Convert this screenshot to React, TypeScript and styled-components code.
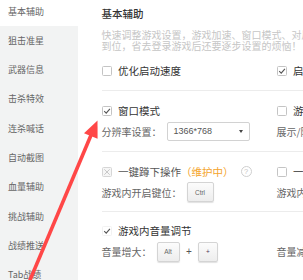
import React from 'react';
import styled, { createGlobalStyle } from 'styled-components';

const GlobalStyle = createGlobalStyle`
  html, body { margin: 0; padding: 0; background: #fff; }
  body { font-family: "Noto Sans CJK SC", "Noto Sans", sans-serif; }
`;

const Frame = styled.div`
  position: relative;
  display: flex;
  width: 303px;
  height: 280px;
  overflow: hidden;
  background: #fff;
`;

const Sidebar = styled.nav`
  flex: 0 0 78px;
  background: #f2f3f3;
  overflow: hidden;
`;

const NavList = styled.ul`
  list-style: none;
  margin: -3.67px 0 0;
  padding: 0;
`;

const NavItem = styled.li<{ $active?: boolean }>`
  height: 29.33px;
  display: flex;
  align-items: center;
  padding-left: 8px;
  font-size: 9px;
  color: #666;
  background: ${(p) => (p.$active ? '#fff' : 'transparent')};
  white-space: nowrap;
`;

const Main = styled.main`
  flex: 1;
  min-width: 0;
  padding-left: 23.5px;
  overflow: hidden;
`;

const Heading = styled.h2`
  margin: 8px 0 0;
  font-size: 10.5px;
  line-height: 12px;
  font-weight: 500;
  color: #333;
  white-space: nowrap;
`;

const Desc = styled.p`
  margin: 8.5px 0 0;
  font-size: 10px;
  line-height: 11.5px;
  color: #c6c6c6;
  white-space: nowrap;
`;

const Section = styled.section<{ $top: number; $bottom: number }>`
  padding: ${(p) => p.$top}px 0 ${(p) => p.$bottom}px;
  border-bottom: 1px solid ${(p) => (p.$bottom ? '#ececec' : 'transparent')};
`;

const Grid = styled.div`
  display: grid;
  grid-template-columns: 175px 175px;
  row-gap: 4px;
  align-items: center;
`;

const Cell = styled.div<{ $h: number }>`
  display: flex;
  align-items: center;
  height: ${(p) => p.$h}px;
  white-space: nowrap;
`;

type BoxState = 'off' | 'on' | 'tick' | 'disabled';

const Box = styled.span<{ $state: BoxState }>`
  flex: 0 0 auto;
  box-sizing: border-box;
  width: 10px;
  height: 10px;
  margin-right: 6.5px;
  border: 1px solid
    ${(p) => (p.$state === 'tick' ? '#f2f2f2' : p.$state === 'disabled' ? '#d6d6d6' : '#c4c4c4')};
  border-radius: 1.5px;
  background: ${(p) => (p.$state === 'disabled' ? '#f6f6f6' : '#fff')};
  display: flex;
  align-items: center;
  justify-content: center;
`;

const Check = ({ state }: { state: BoxState }) => (
  <Box $state={state}>
    {(state === 'on' || state === 'tick') && (
      <svg width="8" height="8" viewBox="0 0 8 8">
        <path d="M1.2 4.2 L3.2 6.1 L6.9 1.9" fill="none" stroke="#555" strokeWidth="1.1" />
      </svg>
    )}
    {state === 'disabled' && (
      <svg width="8" height="8" viewBox="0 0 8 8">
        <path d="M1.3 1.3 L6.7 6.7 M6.7 1.3 L1.3 6.7" fill="none" stroke="#c8c8c8" strokeWidth="1" />
      </svg>
    )}
  </Box>
);

const TitleLabel = styled.span<{ $muted?: boolean }>`
  font-size: 10.5px;
  color: ${(p) => (p.$muted ? '#555' : '#333')};
`;

const SubLabel = styled.span`
  font-size: 10px;
  color: #666;
  margin-right: 5px;
`;

const Maint = styled.span`
  font-size: 10.5px;
  color: #f4a42c;
`;

const Help = styled.span`
  box-sizing: border-box;
  width: 11px;
  height: 11px;
  margin-left: 7px;
  border: 1px solid #cfcfcf;
  border-radius: 50%;
  display: inline-flex;
  align-items: center;
  justify-content: center;
  font-family: "Liberation Sans", sans-serif;
  font-size: 7.5px;
  color: #c4c4c4;
`;

const Select = styled.div`
  box-sizing: border-box;
  width: 83.5px;
  height: 19px;
  border: 1px solid #d2d2d2;
  border-radius: 2px;
  display: flex;
  align-items: center;
  justify-content: space-between;
  padding: 0 6px 0 6px;
  font-family: "Liberation Sans", sans-serif;
  font-size: 9px;
  color: #555;
`;

const Caret = styled.span`
  width: 0;
  height: 0;
  border-left: 2.5px solid transparent;
  border-right: 2.5px solid transparent;
  border-top: 3px solid #444;
`;

const Key = styled.span<{ $w: number }>`
  box-sizing: border-box;
  width: ${(p) => p.$w}px;
  height: 20px;
  border: 1px solid #d4d4d4;
  border-radius: 2px;
  background: linear-gradient(#fcfcfc, #ededed);
  box-shadow: 0 1px 1px rgba(0, 0, 0, 0.12);
  display: inline-flex;
  align-items: center;
  justify-content: center;
  font-family: "Liberation Sans", sans-serif;
  font-size: 6.5px;
  color: #666;
`;

const Plus = styled.span`
  font-family: "Liberation Sans", sans-serif;
  font-size: 10px;
  color: #555;
  margin: 0 6px 0 6.5px;
`;

const ArrowLayer = styled.svg`
  position: absolute;
  left: 0;
  top: 0;
  pointer-events: none;
`;

const navItems = ['基本辅助', '狙击准星', '武器信息', '击杀特效', '连杀喊话', '自动截图', '血量辅助', '挑战辅助', '战绩推送', 'Tab战绩'];

export default function App() {
  return (
    <>
      <GlobalStyle />
      <Frame>
        <Sidebar>
          <NavList>
            {navItems.map((n, i) => (
              <NavItem key={n} $active={i === 0}>
                {n}
              </NavItem>
            ))}
          </NavList>
        </Sidebar>
        <Main>
          <Heading>基本辅助</Heading>
          <Desc>
            快速调整游戏设置，游戏加速、窗口模式、对局设置一步
            <br />
            到位，省去登录游戏后还要逐步设置的烦恼！
          </Desc>

          <Section $top={12.2} $bottom={12.8}>
            <Grid>
              <Cell $h={14}>
                <Check state="off" />
                <TitleLabel>优化启动速度</TitleLabel>
              </Cell>
              <Cell $h={14}>
                <Check state="on" />
                <TitleLabel>启动游戏加速</TitleLabel>
              </Cell>
            </Grid>
          </Section>

          <Section $top={12.5} $bottom={10.5}>
            <Grid>
              <Cell $h={14}>
                <Check state="on" />
                <TitleLabel>窗口模式</TitleLabel>
              </Cell>
              <Cell $h={14}>
                <Check state="off" />
                <TitleLabel>游戏内显示信息</TitleLabel>
              </Cell>
              <Cell $h={19}>
                <SubLabel>分辨率设置：</SubLabel>
                <Select>
                  <span>1366*768</span>
                  <Caret />
                </Select>
              </Cell>
              <Cell $h={19}>
                <SubLabel>展示/隐藏键位</SubLabel>
              </Cell>
            </Grid>
          </Section>

          <Section $top={12.5} $bottom={9.5}>
            <Grid>
              <Cell $h={14}>
                <Check state="disabled" />
                <TitleLabel $muted>一键蹲下操作</TitleLabel>
                <Maint>（维护中）</Maint>
                <Help>?</Help>
              </Cell>
              <Cell $h={14}>
                <Check state="off" />
                <TitleLabel>一键静步操作</TitleLabel>
              </Cell>
              <Cell $h={19}>
                <SubLabel>游戏内开启键位：</SubLabel>
                <Key $w={27}>Ctrl</Key>
              </Cell>
              <Cell $h={19}>
                <SubLabel>游戏内开启键位：</SubLabel>
              </Cell>
            </Grid>
          </Section>

          <Section $top={11.5} $bottom={0}>
            <Grid>
              <Cell $h={14}>
                <Check state="tick" />
                <TitleLabel>游戏内音量调节</TitleLabel>
              </Cell>
              <Cell $h={14} />
              <Cell $h={20}>
                <SubLabel>音量增大：</SubLabel>
                <Key $w={23}>Alt</Key>
                <Plus>+</Plus>
                <Key $w={20} style={{ color: '#535' }}>+</Key>
              </Cell>
              <Cell $h={20}>
                <SubLabel>音量减小：</SubLabel>
              </Cell>
            </Grid>
          </Section>
        </Main>
        <ArrowLayer width="303" height="280" viewBox="0 0 303 280">
          <line x1="27.5" y1="286" x2="91.5" y2="134" stroke="#ff4747" strokeWidth="3.6" />
          <polygon points="97.5,120.5 84,133.2 97.6,138.8" fill="#ff4747" />
        </ArrowLayer>
      </Frame>
    </>
  );
}
